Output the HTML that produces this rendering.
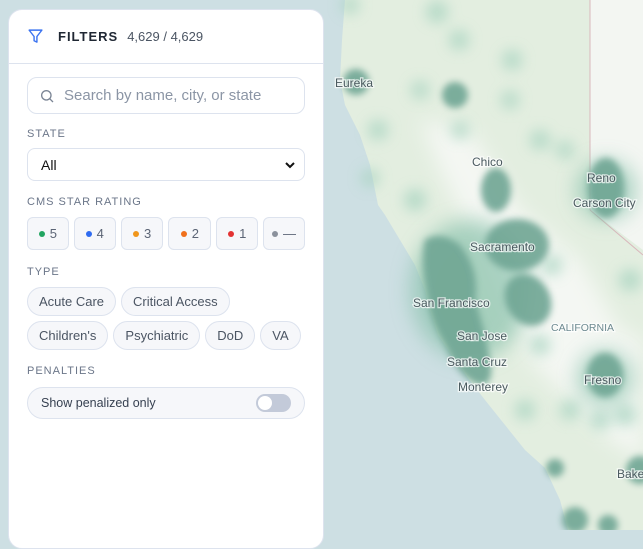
<!DOCTYPE html>
<html><head><meta charset="utf-8"><style>
*{box-sizing:border-box;margin:0;padding:0}
body{width:643px;height:530px;overflow:hidden;position:relative;font-family:"Liberation Sans",sans-serif;background:#cddfe3}
#map{position:absolute;left:0;top:0}
.panel{position:absolute;left:8px;top:9px;width:316px;height:540px;background:#fff;border-radius:14px;border:1px solid #dde3ee}
.hdr{height:54px;border-bottom:1px solid #dde3ee;display:flex;align-items:center;padding-left:18px}
.hdr b{font-size:13px;letter-spacing:1px;color:#1f2733;margin-left:14px}
.hdr span{font-size:13px;color:#4b5563;margin-left:9px}
.a{position:absolute;left:18px;right:18px}
.search{height:37px;border:1px solid #dde3ee;border-radius:10px;display:flex;align-items:center;padding-left:11px;color:#8b95a5;font-size:15px;white-space:nowrap;overflow:hidden}
.lbl{font-size:11px;letter-spacing:1px;color:#6b7689;line-height:13px}
.sel{height:33px;border:1px solid #dde3ee;border-radius:8px;display:flex;align-items:center;justify-content:space-between;padding:0 8px 0 13px;font-size:14px;color:#111}
.stars{display:flex;gap:5px}
.star{width:42px;height:33px;border:1px solid #dde3ee;border-radius:6px;background:#f6f7fa;display:flex;align-items:center;justify-content:center;font-size:13px;color:#5b6475}
.star i{width:6px;height:6px;border-radius:50%;display:inline-block;margin-right:5px}
.chips{display:flex;flex-wrap:wrap;gap:5px 5px}
.chip{height:29px;border:1px solid #dde3ee;border-radius:15px;background:#f6f7fa;padding:0 11px;display:flex;align-items:center;font-size:13px;color:#4b5563}
.tog{height:32px;border:1px solid #dde3ee;border-radius:16px;background:#f6f7fa;display:flex;align-items:center;justify-content:space-between;padding:0 13px 0 13px;font-size:12.5px;color:#374151}
.sw{width:35px;height:18px;border-radius:9px;background:#c3cad9;position:relative}
.sw:after{content:"";position:absolute;left:2px;top:2px;width:14px;height:14px;border-radius:50%;background:#fff}
</style></head><body>
<svg id="map" width="643" height="530" viewBox="0 0 643 530">
<defs><filter id="b" x="-50%" y="-50%" width="200%" height="200%"><feGaussianBlur stdDeviation="7"/></filter>
<filter id="b2" x="-50%" y="-50%" width="200%" height="200%"><feGaussianBlur stdDeviation="3.5"/></filter>
<filter id="b3" x="-50%" y="-50%" width="200%" height="200%"><feGaussianBlur stdDeviation="10"/></filter></defs>
<rect width="643" height="530" fill="#cddfe3"/>
<path d="M345,0 L342,40 L340,80 L345,105 L360,135 L370,165 L378,205 L385,215 L400,240 L415,265 L425,290 L430,310 L438,335 L452,355 L468,378 L485,400 L505,425 L525,450 L545,468 L560,500 L568,530 L643,530 L643,0 Z" fill="#e3eee0"/>
<path d="M420,120 L470,130 L520,210 L580,260 L620,330 L643,340 L643,460 L610,440 L570,400 L530,360 L500,300 L470,230 L440,170 Z" fill="#f4f7f3" filter="url(#b3)"/>
<path d="M590,0 L643,0 L643,250 L590,210 Z" fill="#f3f6f2"/>
<line x1="590" y1="0" x2="590" y2="210" stroke="#d9b8bc" stroke-width="1"/>
<line x1="590" y1="210" x2="643" y2="255" stroke="#d9b8bc" stroke-width="1"/>
<g fill="#a6d3bf" opacity="0.75" filter="url(#b)">
<circle cx="437" cy="12" r="11"/><circle cx="459" cy="40" r="10"/><circle cx="512" cy="60" r="10"/><circle cx="510" cy="100" r="9"/><circle cx="378" cy="130" r="10"/><circle cx="370" cy="178" r="9"/><circle cx="415" cy="200" r="11"/><circle cx="540" cy="140" r="10"/><circle cx="565" cy="150" r="9"/><circle cx="552" cy="265" r="10"/><circle cx="540" cy="345" r="10"/><circle cx="525" cy="410" r="10"/><circle cx="570" cy="410" r="10"/><circle cx="630" cy="280" r="11"/><circle cx="625" cy="415" r="11"/><circle cx="460" cy="130" r="9"/><circle cx="350" cy="5" r="9"/><circle cx="420" cy="90" r="9"/><circle cx="600" cy="420" r="10"/>
</g>
<g fill="#8cc3ae" opacity="0.7" filter="url(#b3)">
<ellipse cx="470" cy="290" rx="60" ry="70"/><circle cx="606" cy="190" r="30"/><circle cx="605" cy="378" r="28"/>
</g>
<g fill="#6fa694" opacity="0.9" filter="url(#b2)">
<circle cx="356" cy="82" r="13"/><circle cx="455" cy="95" r="13"/>
<ellipse cx="496" cy="190" rx="15" ry="22"/>
<ellipse cx="517" cy="245" rx="32" ry="26"/>
<path d="M425,240 Q440,230 460,245 Q480,270 475,300 Q485,330 490,360 Q495,385 480,385 Q460,380 445,345 Q430,320 428,300 Q420,260 425,240 Z"/>
<ellipse cx="528" cy="300" rx="22" ry="27" transform="rotate(-30 528 300)"/>
<ellipse cx="606" cy="188" rx="18" ry="30"/>
<ellipse cx="605" cy="375" rx="18" ry="22"/>
<circle cx="640" cy="470" r="14"/><circle cx="555" cy="468" r="9"/><circle cx="575" cy="520" r="13"/><circle cx="608" cy="525" r="10"/>
</g>
<g font-family="Liberation Sans,sans-serif" font-size="12" fill="#4a5a5f" stroke="#fff" stroke-width="2.5" paint-order="stroke" stroke-opacity="0.7">
<text x="335" y="87">Eureka</text><text x="472" y="166">Chico</text><text x="587" y="182">Reno</text>
<text x="573" y="207">Carson City</text><text x="470" y="251">Sacramento</text><text x="413" y="307">San Francisco</text>
<text x="457" y="340">San Jose</text><text x="447" y="366">Santa Cruz</text><text x="458" y="391">Monterey</text>
<text x="584" y="384">Fresno</text><text x="617" y="478">Bake</text>
<text x="551" y="331" font-size="10.5" fill="#6d8a90">CALIFORNIA</text>
</g>
</svg>
<div class="panel">
<div class="hdr">
<svg width="17" height="17" viewBox="0 0 24 24" fill="none" stroke="#3b73f0" stroke-width="2" stroke-linejoin="round"><path d="M3 3h18l-7 9v8l-4-2v-6z"/></svg>
<b>FILTERS</b><span>4,629 / 4,629</span></div>
<div class="a search" style="top:67px"><svg width="16" height="16" viewBox="0 0 24 24" fill="none" stroke="#7b8595" stroke-width="2"><circle cx="11" cy="11" r="7"/><path d="M16 16l5 5"/></svg><span style="margin-left:9px">Search by name, city, or state</span></div>
<div class="a lbl" style="top:118px">STATE</div>
<div class="a sel" style="top:138px">All<svg width="12" height="12" viewBox="0 0 12 12"><path d="M2 4l4 4 4-4" fill="none" stroke="#111" stroke-width="2"/></svg></div>
<div class="a lbl" style="top:186px">CMS STAR RATING</div>
<div class="a stars" style="top:207px">
<div class="star"><i style="background:#22a561"></i>5</div>
<div class="star"><i style="background:#2f6bf0"></i>4</div>
<div class="star" style="width:43px"><i style="background:#f0961c"></i>3</div>
<div class="star" style="width:43px"><i style="background:#f0701c"></i>2</div>
<div class="star"><i style="background:#e33232"></i>1</div>
<div class="star"><i style="background:#8b919c"></i>—</div>
</div>
<div class="a lbl" style="top:256px">TYPE</div>
<div class="a chips" style="top:277px">
<div class="chip">Acute Care</div><div class="chip">Critical Access</div>
<div class="chip">Children's</div><div class="chip">Psychiatric</div><div class="chip">DoD</div><div class="chip">VA</div>
</div>
<div class="a lbl" style="top:355px">PENALTIES</div>
<div class="a tog" style="top:377px">Show penalized only<div class="sw"></div></div>
</div>
</body></html>
